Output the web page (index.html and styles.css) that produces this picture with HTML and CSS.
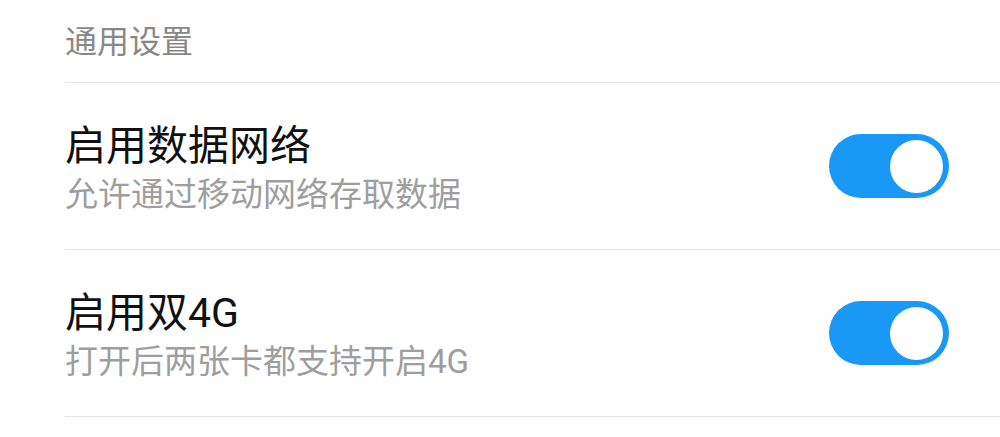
FILE: index.html
```html
<!DOCTYPE html>
<html lang="zh-CN">
<head>
  <meta charset="UTF-8">
  <meta name="viewport" content="width=device-width, initial-scale=1.0">
  <title>通用设置</title>
  <link rel="stylesheet" href="styles.css">
</head>
<body>
  <div class="settings">
    <div class="section-title">通用设置</div>

    <div class="setting-row">
      <div class="setting-text">
        <div class="setting-name">启用数据网络</div>
        <div class="setting-desc">允许通过移动网络存取数据</div>
      </div>
      <div class="switch on"><span class="knob"></span></div>
    </div>

    <div class="setting-row">
      <div class="setting-text">
        <div class="setting-name">启用双4G</div>
        <div class="setting-desc">打开后两张卡都支持开启4G</div>
      </div>
      <div class="switch on"><span class="knob"></span></div>
    </div>
  </div>
</body>
</html>
```

FILE: styles.css
```css
body {
  margin: 0;
  background-color: #ffffff;
  font-family: Roboto, "Noto Sans CJK SC", sans-serif;
}

.settings {
  padding-left: 65px;
}

.section-title {
  height: 78px;
  padding-bottom: 4px;
  display: flex;
  align-items: center;
  font-size: 32px;
  color: #888888;
  border-bottom: 1px solid #e6e6e6;
}

.setting-row {
  height: 166px;
  display: flex;
  align-items: center;
  justify-content: space-between;
  border-bottom: 1px solid #e6e6e6;
}

.setting-text {
  display: flex;
  flex-direction: column;
  padding-top: 5px;
}

.setting-name {
  font-size: 41px;
  line-height: 1.3;
  color: #111111;
}

.setting-desc {
  font-size: 33px;
  line-height: 1.3;
  color: #9e9e9e;
}

.switch {
  width: 120px;
  height: 64px;
  margin-right: 51px;
  border-radius: 32px;
  background-color: #1a98f5;
  box-sizing: border-box;
  padding: 5px 6px;
  display: flex;
  justify-content: flex-end;
  align-items: center;
}

.knob {
  width: 53px;
  height: 53px;
  border-radius: 50%;
  background-color: #ffffff;
}
```
